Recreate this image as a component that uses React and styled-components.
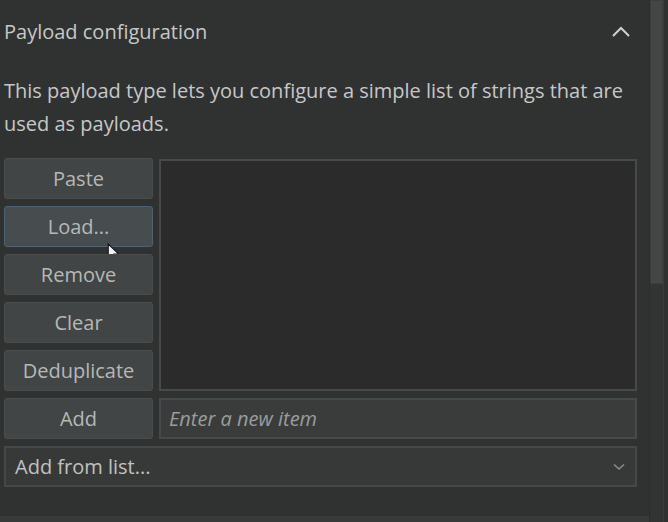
import React from "react"
import styled, { createGlobalStyle } from "styled-components"

const Global = createGlobalStyle`
  html, body {
    margin: 0;
    padding: 0;
    background: #303232;
    overflow: hidden;
  }
  * {
    box-sizing: border-box;
  }
`

const buttons = ["Paste", "Load...", "Remove", "Clear", "Deduplicate"]

const App = () => (
  <Page>
    <Global />
    <Main>
      <Header>
        <Title>Payload configuration</Title>
        <svg width="20" height="14" viewBox="0 0 20 14">
          <path d="M2 12 L10 4 L18 12" fill="none" stroke="#d0d0d0" strokeWidth="2" />
        </svg>
      </Header>
      <Description>
        This payload type lets you configure a simple list of strings that are
        used as payloads.
      </Description>
      <Editor>
        {buttons.map((b, i) => (
          <Button key={b} $hover={b === "Load..."} style={{ gridRow: i + 1 }}>
            {b}
            {b === "Load..." && (
              <Cursor width="13" height="20" viewBox="0 0 12 19">
                <path
                  d="M1 1 L1 15 L4.5 11.5 L7 17 L9 16 L6.5 10.5 L11 10.5 Z"
                  fill="#f2f2f2"
                  stroke="#111"
                  strokeWidth="1"
                />
              </Cursor>
            )}
          </Button>
        ))}
        <ListBox />
        <Button>Add</Button>
        <Input placeholder="Enter a new item" />
        <Select>
          <span>Add from list...</span>
          <svg width="12" height="8" viewBox="0 0 12 8">
            <path d="M1 1.5 L6 6 L11 1.5" fill="none" stroke="#8a8c8c" strokeWidth="1.6" />
          </svg>
        </Select>
      </Editor>
      <Footer />
    </Main>
    <Scrollbar>
      <Track>
        <Thumb />
      </Track>
      <Edge />
    </Scrollbar>
  </Page>
)

export default App

const Page = styled.div`
  display: flex;
  width: 668px;
  height: 522px;
  font-family: "Open Sans", "Noto Sans", sans-serif;
  font-size: 20px;
`
const Main = styled.div`
  width: 649px;
  display: flex;
  flex-direction: column;
  position: relative;
`
const Header = styled.div`
  height: 62px;
  display: flex;
  align-items: center;
  justify-content: space-between;
  padding: 0 18px 0 4px;
`
const Title = styled.div`
  color: #c6c8c8;
`
const Description = styled.p`
  margin: 12px 0 0;
  padding: 0 4px;
  color: #c6c8c8;
  line-height: 33px;
  width: 640px;
`
const Editor = styled.div`
  margin-top: 18px;
  margin-left: 4px;
  width: 633px;
  display: grid;
  grid-template-columns: 149px 1fr;
  grid-auto-rows: 41px;
  row-gap: 7px;
  column-gap: 6px;
`
const Button = styled.div`
  position: relative;
  display: flex;
  align-items: center;
  justify-content: center;
  border-radius: 3px;
  background: ${(p) => (p.$hover ? "#474c4f" : "#424545")};
  border: 1px solid ${(p) => (p.$hover ? "#4e6170" : "#4a4d4d")};
  color: #b6b8b8;
`
const Cursor = styled.svg`
  position: absolute;
  left: 102px;
  top: 36px;
`
const ListBox = styled.div`
  grid-column: 2;
  grid-row: 1 / span 5;
  margin-top: 1px;
  background: #2b2b2b;
  border: 2px solid #474a4a;
`
const Input = styled.input`
  border: 2px solid #474a4a;
  background: #3a3c3c;
  color: #c6c8c8;
  font-family: inherit;
  font-size: 20px;
  padding: 0 8px;
  outline: none;
  &::placeholder {
    color: #9a9c9c;
    font-style: italic;
  }
`
const Select = styled.div`
  grid-column: 1 / span 2;
  display: flex;
  align-items: center;
  justify-content: space-between;
  padding: 0 10px 0 9px;
  background: #373939;
  border: 2px solid #464848;
  color: #c0c2c2;
`
const Footer = styled.div`
  margin-top: auto;
  height: 6px;
  background: #383a3a;
`
const Scrollbar = styled.div`
  width: 19px;
  display: flex;
  border-left: 1px solid #2c2e2e;
`
const Track = styled.div`
  width: 13px;
  background: #323434;
`
const Thumb = styled.div`
  height: 284px;
  background: #444646;
  border: 1px solid #3c3e3e;
`
const Edge = styled.div`
  flex: 1;
  background: #2f3131;
  border-left: 1px solid #3a3c3c;
`
